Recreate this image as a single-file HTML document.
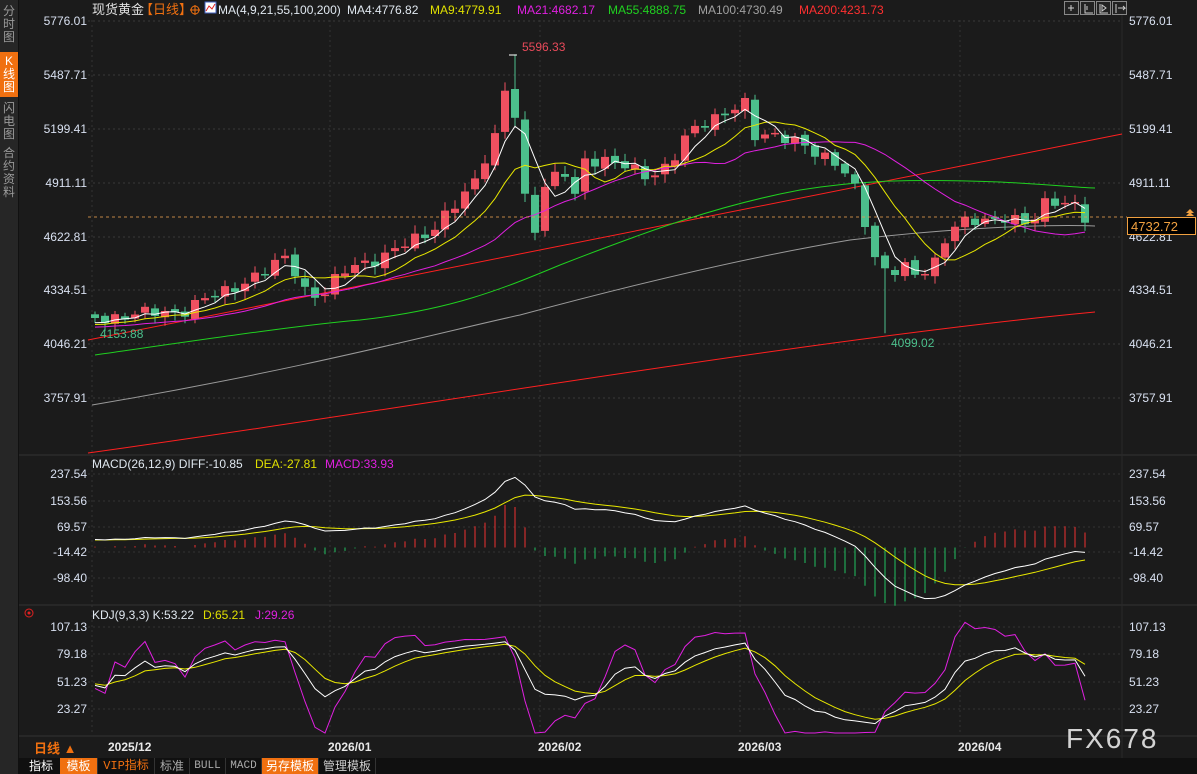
<!DOCTYPE html>
<html><head><meta charset="utf-8">
<style>
html,body{margin:0;padding:0;background:#1b1b1b;width:1197px;height:774px;overflow:hidden;font-family:"Liberation Sans","Noto Sans CJK SC",sans-serif}
#c{position:absolute;left:0;top:0}
.side{position:absolute;left:0;top:0;width:18px;height:774px;background:#262626;border-right:1px solid #111}
.side div{color:#9a9a9a;font-size:12px;line-height:13px;text-align:center;width:18px}
.tb{position:absolute;left:18px;top:758px;height:16px;width:1179px;background:#101010;font-size:12px;line-height:16px}
.tb span{position:absolute;top:0;height:16px;text-align:center;color:#ddd;border-right:1px solid #333}
</style></head><body>
<svg id="c" width="1197" height="774" xmlns="http://www.w3.org/2000/svg"></svg>
<div class="side">
<div style="padding-top:5px">分<br>时<br>图</div>
<div style="background:#f07010;color:#fff;margin-top:8px;padding:3px 0">K<br>线<br>图</div>
<div style="margin-top:5px">闪<br>电<br>图</div>
<div style="margin-top:6px">合<br>约<br>资<br>料</div>
</div>
<div class="tb">
<span style="left:4px;width:38px;color:#fff">指标</span>
<span style="left:42px;width:37px;background:#f07010;color:#fff">模板</span>
<span style="left:80px;width:56px;color:#f07010;font-family:'Liberation Mono','Noto Sans CJK SC',monospace">VIP指标</span>
<span style="left:137px;width:34px;color:#aaa">标准</span>
<span style="left:172px;width:35px;color:#aaa;font-family:'Liberation Mono',monospace;font-size:11px">BULL</span>
<span style="left:208px;width:35px;color:#aaa;font-family:'Liberation Mono',monospace;font-size:11px">MACD</span>
<span style="left:244px;width:56px;background:#f07010;color:#fff">另存模板</span>
<span style="left:301px;width:56px;color:#ccc">管理模板</span>
</div>
<script>
const svg=document.getElementById('c');
let out='';
function add(s){out+=s;}
const Y=p=>21+(5776.01-p)*0.18615, P=y=>5776.01-(y-21)/0.18615;
const pl=[[5776.01,21],[5487.71,75],[5199.41,129],[4911.11,183],[4622.81,237],[4334.51,290],[4046.21,344],[3757.91,398]];
const lab='fill="#d8e0f0" font-size="12"';
pl.forEach(([v,y])=>{add(`<line x1="88" x2="1122" y1="${y}" y2="${y}" stroke="#3a3a3a" stroke-dasharray="2,3"/>`);
add(`<text x="87" y="${y+4}" text-anchor="end" ${lab}>${v.toFixed(2)}</text><text x="1129" y="${y+4}" ${lab}>${v.toFixed(2)}</text>`);});
const ml=[[237.54,474],[153.56,501],[69.57,527],[-14.42,552],[-98.40,578]];
ml.forEach(([v,y])=>{add(`<line x1="88" x2="1122" y1="${y}" y2="${y}" stroke="#333" stroke-dasharray="2,3"/>`);
add(`<text x="87" y="${y+4}" text-anchor="end" ${lab}>${v.toFixed(2)}</text><text x="1129" y="${y+4}" ${lab}>${v.toFixed(2)}</text>`);});
const kl=[[107.13,627],[79.18,654],[51.23,682],[23.27,709]];
kl.forEach(([v,y])=>{add(`<line x1="88" x2="1122" y1="${y}" y2="${y}" stroke="#333" stroke-dasharray="2,3"/>`);
add(`<text x="87" y="${y+4}" text-anchor="end" ${lab}>${v.toFixed(2)}</text><text x="1129" y="${y+4}" ${lab}>${v.toFixed(2)}</text>`);});
[92,330,540,740,960].forEach(x=>add(`<line x1="${x}" x2="${x}" y1="20" y2="735" stroke="#333" stroke-dasharray="2,3"/>`));
[455,605,736].forEach(y=>add(`<line x1="18" x2="1197" y1="${y}" y2="${y}" stroke="#333"/>`));
add(`<line x1="1122" x2="1122" y1="0" y2="758" stroke="#2a2a2a"/>`);
const A=[[95,318],[130,315],[180,312],[200,300],[230,292],[260,270],[290,258],[300,290],[320,295],[340,272],[370,265],[400,242],[430,238],[445,215],[460,195],[475,180],[495,140],[503,92],[513,95],[523,190],[536,230],[546,180],[565,175],[578,205],[585,160],[610,158],[630,170],[650,180],[670,160],[690,130],[710,125],[735,105],[745,100],[755,135],[780,140],[800,140],[815,150],[830,160],[850,180],[860,200],[868,235],[878,265],[890,270],[905,268],[918,280],[935,262],[950,225],[965,220],[990,225],[1010,215],[1030,222],[1045,205],[1060,205],[1075,205],[1088,218]];
function ay(x){for(let i=0;i<A.length-1;i++){if(x>=A[i][0]&&x<=A[i+1][0]){const t=(x-A[i][0])/(A[i+1][0]-A[i][0]);return A[i][1]+t*(A[i+1][1]-A[i][1]);}}return A[A.length-1][1];}
const N=100,xs=[],C=[],O=[],H=[],L=[];
for(let i=0;i<N;i++){const x=95+i*10;xs.push(x);const n=Math.sin(i*2.3)*5+Math.sin(i*0.9)*3;C.push(P(ay(x)+n));}
for(let i=0;i<N;i++){const o=i?C[i-1]+Math.sin(i*1.7)*12:C[0]+20;O.push(o);
const hi=Math.max(o,C[i]),lo=Math.min(o,C[i]);H.push(hi+15+Math.abs(Math.sin(i*3.1))*30);L.push(lo-15-Math.abs(Math.cos(i*2.7))*30);}
let pk=xs.findIndex(x=>x>=513);H[pk]=5596.33;
let lw=xs.findIndex(x=>x>=885);L[lw]=4099.02;
L[0]=4153.88;
function ma(n){const r=[];for(let i=0;i<N;i++){let s=0;for(let k=i-n+1;k<=i;k++)s+=k>=0?C[k]:4150+k*2;r.push(s/n);}return r;}
function pline(arr,col){let d='';for(let i=0;i<N;i++){d+=(d?'L':'M')+xs[i]+','+Y(arr[i]).toFixed(1);}add(`<path d="${d}" stroke="${col}" fill="none" stroke-width="1"/>`);}
add(`<path d="M88,453 C400,410 800,340 1095,312" stroke="#ff2020" fill="none"/>`);
add(`<path d="M88,340 L1122,134" stroke="#ff2020" fill="none"/>`);
add(`<path d="M92,405 C300,370 450,330 520,315 C650,280 760,255 850,240 C950,228 1050,224 1095,226" stroke="#9a9a9a" fill="none"/>`);
add(`<path d="M95,355 C200,340 300,325 360,320 C450,310 500,290 560,265 C650,230 720,205 800,190 C850,182 900,178 1000,182 C1060,185 1080,188 1095,188" stroke="#20d020" fill="none"/>`);
for(let i=0;i<N;i++){const up=C[i]>=O[i],col=up?'#ef5060':'#4cbf8c';const x=xs[i];
const yt=Y(Math.max(O[i],C[i])),yb=Y(Math.min(O[i],C[i]));
add(`<line x1="${x}" x2="${x}" y1="${Y(H[i]).toFixed(1)}" y2="${Y(L[i]).toFixed(1)}" stroke="${col}"/>`);
add(`<rect x="${x-4}" y="${yt.toFixed(1)}" width="8" height="${Math.max(1.5,yb-yt).toFixed(1)}" fill="${col}"/>`);}
pline(ma(21),'#e020e0');pline(ma(9),'#e8e800');pline(ma(4),'#ffffff');
add(`<text x="522" y="51" fill="#e84a5a" font-size="12">5596.33</text><line x1="509" x2="517" y1="55" y2="55" stroke="#fff"/>`);
add(`<text x="891" y="347" fill="#4cbf8c" font-size="12">4099.02</text>`);
add(`<text x="100" y="338" fill="#4cbf8c" font-size="12">4153.88</text>`);
add(`<line x1="88" x2="1127" y1="217" y2="217" stroke="#e8a050" stroke-dasharray="3,3" opacity="0.8"/>`);
add(`<rect x="1127.5" y="217.5" width="68" height="17" fill="#000" stroke="#f0a040"/><text x="1131" y="231" fill="#f0a040" font-size="13">4732.72</text>`);
add(`<path d="M1186,213 l4,-4 l4,4z M1186,216 l4,-4 l4,4z" fill="#f0a040"/>`);
const pad=[];for(let k=0;k<60;k++)pad.push(3950+k*3.5);const all=pad.concat(C);
let e12=all[0],e26=all[0],dea=0;const DIF=[],DEA=[],M=[];
all.forEach((c,i)=>{e12=e12*11/13+c*2/13;e26=e26*25/27+c*2/27;const d=e12-e26;dea=dea*0.8+d*0.2;if(i>=60){DIF.push(d);DEA.push(dea);M.push(2*(d-dea));}});
const my=v=>547.5-v*0.31;
for(let i=0;i<N;i++){add(`<line x1="${xs[i]}" x2="${xs[i]}" y1="${my(0)}" y2="${my(M[i]).toFixed(1)}" stroke="${M[i]>=0?'#ef3030':'#20c060'}"/>`);}
function ml2(arr,col){let d='';for(let i=0;i<N;i++)d+=(i?'L':'M')+xs[i]+','+my(arr[i]).toFixed(1);add(`<path d="${d}" stroke="${col}" fill="none"/>`);}
ml2(DEA,'#e8e800');ml2(DIF,'#fff');
let K=50,D=50;const KK=[],DD=[],JJ=[];
for(let i=0;i<N;i++){let h=-1e9,l=1e9;for(let k=Math.max(0,i-8);k<=i;k++){h=Math.max(h,H[k]);l=Math.min(l,L[k]);}
const r=(C[i]-l)/(h-l)*100;K=K*2/3+r/3;D=D*2/3+K/3;KK.push(K);DD.push(D);JJ.push(3*K-2*D);}
const ky=v=>Math.max(612,Math.min(733,682-(v-51.23)*0.983));
function kl2(arr,col){let d='';for(let i=0;i<N;i++)d+=(i?'L':'M')+xs[i]+','+ky(arr[i]).toFixed(1);add(`<path d="${d}" stroke="${col}" fill="none"/>`);}
kl2(JJ,'#e020e0');kl2(DD,'#e8e800');kl2(KK,'#fff');
add(`<text y="14" font-size="12"><tspan x="92" fill="#e0e0e0" font-size="13">现货黄金</tspan><tspan x="140" fill="#f07010" font-size="13">【日线】</tspan><tspan x="218" fill="#e0e8f0">MA(4,9,21,55,100,200)</tspan><tspan x="347" fill="#e0e8f0">MA4:4776.82</tspan><tspan x="430" fill="#e0e000">MA9:4779.91</tspan><tspan x="517" fill="#e020e0">MA21:4682.17</tspan><tspan x="608" fill="#20d020">MA55:4888.75</tspan><tspan x="698" fill="#a0a0a0">MA100:4730.49</tspan><tspan x="799" fill="#ff3030">MA200:4231.73</tspan></text>`);
add(`<circle cx="195" cy="10" r="4" fill="none" stroke="#f07010"/><line x1="190" x2="200" y1="10" y2="10" stroke="#f07010"/><line x1="195" x2="195" y1="5" y2="15" stroke="#f07010"/>`);
add(`<rect x="205" y="2" width="11" height="11" fill="#fff" stroke="#4060c0"/><path d="M206,11 L209,6 L212,9 L215,4" stroke="#e02020" fill="none"/>`);
add(`<text y="468" font-size="12"><tspan x="92" fill="#e0e8f0">MACD(26,12,9) DIFF:-10.85</tspan><tspan x="255" fill="#e0e000">DEA:-27.81</tspan><tspan x="325" fill="#e020e0">MACD:33.93</tspan></text>`);
add(`<text y="619" font-size="12"><tspan x="92" fill="#e0e8f0">KDJ(9,3,3) K:53.22</tspan><tspan x="203" fill="#e0e000">D:65.21</tspan><tspan x="255" fill="#e020e0">J:29.26</tspan></text>`);
add(`<circle cx="29" cy="613" r="4" fill="none" stroke="#e02020"/><circle cx="29" cy="613" r="1.5" fill="#e02020"/>`);
[1064,1080,1096,1112].forEach(x=>add(`<rect x="${x}.5" y="1.5" width="14" height="13" fill="#222" stroke="#888"/>`));
add(`<path d="M1068,8h6M1071,5v6M1085,4v9h8M1087,6v4M1100,4v9h8M1102,5l4,3l-4,3z M1116,4v9M1118,8h7l-2,-2M1123,10l2,-2" stroke="#ccc" fill="none"/>`);
add(`<text y="751" font-size="12" font-weight="bold" fill="#e8e8e8"><tspan x="108">2025/12</tspan><tspan x="328">2026/01</tspan><tspan x="538">2026/02</tspan><tspan x="738">2026/03</tspan><tspan x="958">2026/04</tspan></text>`);
add(`<text x="34" y="753" font-size="13" font-weight="bold" fill="#f07010">日线 ▲</text>`);
add(`<text x="1066" y="748" font-size="28" fill="#e8e8e8" letter-spacing="2" opacity="0.9">FX678</text>`);
svg.innerHTML=out;
</script>
</body></html>
